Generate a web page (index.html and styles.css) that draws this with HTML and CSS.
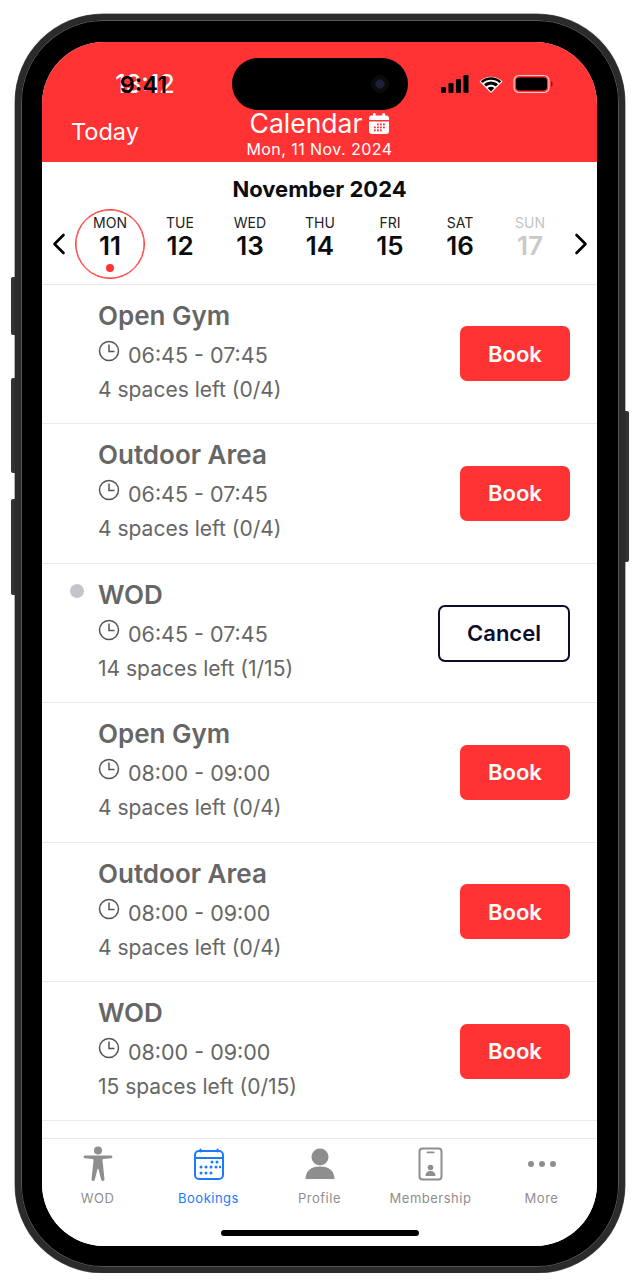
FILE: index.html
```html
<!DOCTYPE html>
<html lang="en">
<head>
  <meta charset="UTF-8">
  <title>Calendar</title>
  <link rel="stylesheet" href="styles.css">
</head>
<body>

  <div class="phone">
    <span class="side-btn btn-mute"></span>
    <span class="side-btn btn-up"></span>
    <span class="side-btn btn-down"></span>
    <span class="side-btn btn-power"></span>

    <div class="screen">
      <div class="island">
        <span class="island-cam"></span>
      </div>

      <header class="header">
        <div class="status">
          <div class="clock">
            <span class="clock-under">13:12</span>
            <span class="clock-over">9:41</span>
          </div>
          <div class="status-icons">
            <svg width="28" height="18" viewBox="0 0 28 18">
              <rect x="0" y="12" width="5" height="6" rx="1.2"/>
              <rect x="7.5" y="8" width="5" height="10" rx="1.2"/>
              <rect x="15" y="4" width="5" height="14" rx="1.2"/>
              <rect x="22.5" y="0" width="5" height="18" rx="1.2"/>
            </svg>
            <svg width="26" height="20" viewBox="0 0 26 20">
              <path d="M13 19 L1.5 7.5 C8 1 18 1 24.5 7.5 Z" fill="#fff"/>
              <path d="M13 17.6 L9.6 14 C11.6 12.2 14.4 12.2 16.4 14 Z"/>
              <path d="M8.2 12.6 L6 10.3 C10 6.6 16 6.6 20 10.3 L17.8 12.6 C14.8 10 11.2 10 8.2 12.6 Z"/>
              <path d="M4.6 9 L2.8 7.2 C8.6 2 17.4 2 23.2 7.2 L21.4 9 C16.6 4.8 9.4 4.8 4.6 9 Z"/>
            </svg>
            <svg width="40" height="20" viewBox="0 0 40 20">
              <rect x="1" y="1.5" width="35" height="17" rx="5" fill="none" stroke="#fff" stroke-opacity="0.75" stroke-width="1.2"/>
              <rect x="3" y="3.5" width="31" height="13" rx="3.4" fill="#000"/>
              <rect x="38" y="7.5" width="1.4" height="5" rx="0.7" fill="#7a1a1a"/>
            </svg>
          </div>
        </div>

        <div class="header-main">
          <div class="today">Today</div>
          <div class="header-title">
            <div class="title-line">
              Calendar
              <svg class="title-icon" width="20" height="21" viewBox="0 0 20 21">
                <rect x="4" y="0" width="2.6" height="5" rx="1.2" fill="#fff"/>
                <rect x="13.4" y="0" width="2.6" height="5" rx="1.2" fill="#fff"/>
                <path d="M3 2.5h14a3 3 0 0 1 3 3V7H0V5.500a3 3 0 0 1 3-3z" fill="#fff"/>
                <path d="M0 8.500h20V18a3 3 0 0 1-3 3H3a3 3 0 0 1-3-3z" fill="#fff"/>
                <g fill="#ff3333">
                  <rect x="8" y="10.500" width="1.800" height="1.800"/>
                  <rect x="11" y="10.500" width="1.800" height="1.800"/>
                  <rect x="14" y="10.500" width="1.800" height="1.800"/>
                  <rect x="5" y="13.500" width="1.800" height="1.800"/>
                  <rect x="8" y="13.500" width="1.800" height="1.800"/>
                  <rect x="11" y="13.500" width="1.800" height="1.800"/>
                  <rect x="14" y="13.500" width="1.800" height="1.800"/>
                  <rect x="5" y="16.500" width="1.800" height="1.800"/>
                  <rect x="8" y="16.500" width="1.800" height="1.800"/>
                  <rect x="11" y="16.500" width="1.800" height="1.800"/>
                </g>
              </svg>
            </div>
            <div class="title-sub">Mon, 11 Nov. 2024</div>
          </div>
          <div></div>
        </div>
      </header>

      <section class="week">
        <h2 class="month">November 2024</h2>
        <div class="days">
          <svg class="arrow" width="14" height="22" viewBox="0 0 14 22"><path d="M11.500 2 L2.500 11 L11.500 20" fill="none" stroke="#000" stroke-width="2.600" stroke-linecap="round" stroke-linejoin="round"/></svg>
          <div class="day day-active"><span class="day-name">MON</span><span class="day-num">11</span><span class="day-dot"></span></div>
          <div class="day"><span class="day-name">TUE</span><span class="day-num">12</span></div>
          <div class="day"><span class="day-name">WED</span><span class="day-num">13</span></div>
          <div class="day"><span class="day-name">THU</span><span class="day-num">14</span></div>
          <div class="day"><span class="day-name">FRI</span><span class="day-num">15</span></div>
          <div class="day"><span class="day-name">SAT</span><span class="day-num">16</span></div>
          <div class="day day-off"><span class="day-name">SUN</span><span class="day-num">17</span></div>
          <svg class="arrow" width="14" height="22" viewBox="0 0 14 22"><path d="M2.500 2 L11.500 11 L2.500 20" fill="none" stroke="#000" stroke-width="2.600" stroke-linecap="round" stroke-linejoin="round"/></svg>
        </div>
      </section>

      <main class="classes">
        <div class="row">
          <div class="mark"></div>
          <div class="info">
            <div class="name">Open Gym</div>
            <div class="time"><svg class="clock-icon" viewBox="0 0 22 22"><circle cx="11" cy="11" r="9.500"/><path d="M11 4.500V11.500H16.500"/></svg>06:45 - 07:45</div>
            <div class="spaces">4 spaces left (0/4)</div>
          </div>
          <button class="btn btn-book">Book</button>
        </div>
        <div class="row">
          <div class="mark"></div>
          <div class="info">
            <div class="name">Outdoor Area</div>
            <div class="time"><svg class="clock-icon" viewBox="0 0 22 22"><circle cx="11" cy="11" r="9.500"/><path d="M11 4.500V11.500H16.500"/></svg>06:45 - 07:45</div>
            <div class="spaces">4 spaces left (0/4)</div>
          </div>
          <button class="btn btn-book">Book</button>
        </div>
        <div class="row">
          <div class="mark"><span class="booked-dot"></span></div>
          <div class="info">
            <div class="name">WOD</div>
            <div class="time"><svg class="clock-icon" viewBox="0 0 22 22"><circle cx="11" cy="11" r="9.500"/><path d="M11 4.500V11.500H16.500"/></svg>06:45 - 07:45</div>
            <div class="spaces">14 spaces left (1/15)</div>
          </div>
          <button class="btn btn-cancel">Cancel</button>
        </div>
        <div class="row">
          <div class="mark"></div>
          <div class="info">
            <div class="name">Open Gym</div>
            <div class="time"><svg class="clock-icon" viewBox="0 0 22 22"><circle cx="11" cy="11" r="9.500"/><path d="M11 4.500V11.500H16.500"/></svg>08:00 - 09:00</div>
            <div class="spaces">4 spaces left (0/4)</div>
          </div>
          <button class="btn btn-book">Book</button>
        </div>
        <div class="row">
          <div class="mark"></div>
          <div class="info">
            <div class="name">Outdoor Area</div>
            <div class="time"><svg class="clock-icon" viewBox="0 0 22 22"><circle cx="11" cy="11" r="9.500"/><path d="M11 4.500V11.500H16.500"/></svg>08:00 - 09:00</div>
            <div class="spaces">4 spaces left (0/4)</div>
          </div>
          <button class="btn btn-book">Book</button>
        </div>
        <div class="row">
          <div class="mark"></div>
          <div class="info">
            <div class="name">WOD</div>
            <div class="time"><svg class="clock-icon" viewBox="0 0 22 22"><circle cx="11" cy="11" r="9.500"/><path d="M11 4.500V11.500H16.500"/></svg>08:00 - 09:00</div>
            <div class="spaces">15 spaces left (0/15)</div>
          </div>
          <button class="btn btn-book">Book</button>
        </div>
      </main>

      <nav class="tabs">
        <div class="tab">
          <svg class="tab-icon" width="30" height="36" viewBox="0 0 30 36">
            <circle cx="15" cy="4.500" r="4"/>
            <path d="M2 9.500h26a1.300 1.300 0 0 1 0 2.800l-7.500.7c-.7.1-1 .5-1 1.200l2 19a1.700 1.700 0 0 1-3.300.6L15.500 23h-1l-2.700 10.800a1.700 1.700 0 0 1-3.300-.6l2-19c0-.7-.3-1.100-1-1.200L2 12.300a1.300 1.300 0 0 1 0-2.800z"/>
          </svg>
          <span>WOD</span>
        </div>
        <div class="tab tab-active">
          <svg class="tab-icon" width="30" height="32" viewBox="0 0 30 32">
            <rect x="1" y="3" width="28" height="28" rx="4" fill="none" stroke="#1a7bff" stroke-width="2"/>
            <path d="M1 10h28" stroke="#1a7bff" stroke-width="2"/>
            <rect x="5.500" y="0.500" width="2" height="4" rx="1"/>
            <rect x="22.500" y="0.500" width="2" height="4" rx="1"/>
            <circle cx="18" cy="14" r="1.500"/><circle cx="23" cy="14" r="1.500"/>
            <circle cx="7" cy="19" r="1.500"/><circle cx="12" cy="19" r="1.500"/><circle cx="17" cy="19" r="1.500"/><circle cx="22" cy="19" r="1.500"/><circle cx="26" cy="19" r="1.200"/>
            <circle cx="7" cy="25" r="1.500"/><circle cx="12" cy="25" r="1.500"/><circle cx="17" cy="25" r="1.500"/>
          </svg>
          <span>Bookings</span>
        </div>
        <div class="tab">
          <svg class="tab-icon" width="30" height="32" viewBox="0 0 30 32">
            <circle cx="15" cy="9" r="8.500"/>
            <path d="M0.500 31 C0.500 23 6 18.500 15 18.500 C24 18.500 29.500 23 29.500 31 Z"/>
          </svg>
          <span>Profile</span>
        </div>
        <div class="tab">
          <svg class="tab-icon" width="26" height="34" viewBox="0 0 26 34">
            <rect x="1.500" y="1.500" width="22" height="31" rx="3" fill="none" stroke="#8e8e8e" stroke-width="2"/>
            <rect x="8.500" y="4.500" width="8" height="1.800" rx="0.900"/>
            <circle cx="12.500" cy="20.500" r="2.800"/>
            <path d="M7.500 29 C7.500 25.500 9.500 24 12.500 24 C15.500 24 17.500 25.500 17.500 29 Z"/>
          </svg>
          <span>Membership</span>
        </div>
        <div class="tab">
          <svg class="tab-icon" width="30" height="32" viewBox="0 0 30 32">
            <circle cx="4" cy="16" r="3"/><circle cx="15" cy="16" r="3"/><circle cx="26" cy="16" r="3"/>
          </svg>
          <span>More</span>
        </div>
        <div class="home-bar"></div>
      </nav>
    </div>
  </div>

</body>
</html>
```

FILE: styles.css
```css
body {
  margin: 0;
  background: white;
  font-family: Inter, "Liberation Sans", sans-serif;
}

.phone {
  position: relative;
  box-sizing: border-box;
  width: 610px;
  height: 1259px;
  margin: 14px 0 0 15px;
  padding: 22px 22px 21px 21px;
  background: #000;
  border: 6px solid #2b2b2b;
  border-radius: 88px;
  box-shadow: 0 0 0 0.5px #6a6a6a, inset 0 0 0 1px #555;
}

.side-btn {
  position: absolute;
  width: 4px;
  background: #333;
}

.btn-mute { left: -10px; top: 257px; height: 58px; border-radius: 2px 0 0 2px; }
.btn-up { left: -10px; top: 358px; height: 95px; border-radius: 2px 0 0 2px; }
.btn-down { left: -10px; top: 479px; height: 96px; border-radius: 2px 0 0 2px; }
.btn-power { right: -10px; top: 391px; height: 151px; border-radius: 0 2px 2px 0; }

.screen {
  position: relative;
  display: flex;
  flex-direction: column;
  height: 100%;
  background: white;
  border-radius: 62px;
  overflow: hidden;
}

.island {
  position: absolute;
  left: 190px;
  top: 16px;
  width: 176px;
  height: 52px;
  background: #000;
  border-radius: 26px;
}

.island-cam {
  position: absolute;
  right: 19px;
  top: 17px;
  width: 18px;
  height: 18px;
  border-radius: 50%;
  background: radial-gradient(circle, #1c2038 0 4px, #0a0a0c 5px 9px);
}

/* red header */
.header {
  height: 120px;
  flex-shrink: 0;
  background: #ff3333;
  color: white;
}

.status {
  display: flex;
  align-items: center;
  height: 48px;
  padding-top: 18px;
}

.clock {
  display: grid;
  width: 62px;
  margin-left: 72px;
  justify-items: center;
  align-items: center;
}

.clock span {
  grid-area: 1 / 1;
}

.clock-under {
  color: white;
  font-size: 25px;
  font-weight: 500;
}

.clock-over {
  padding-right: 3px;
  color: black;
  font-size: 23.500px;
  font-weight: 600;
}

.status-icons {
  display: flex;
  align-items: center;
  gap: 9px;
  margin-left: auto;
  padding-right: 44px;
}

.header-main {
  display: grid;
  grid-template-columns: 1fr auto 1fr;
  height: 54px;
}

.today {
  padding-left: 29px;
  padding-top: 9px;
  font-size: 23.500px;
  line-height: 30px;
}

.header-title {
  text-align: center;
}

.title-line {
  display: flex;
  align-items: center;
  justify-content: center;
  gap: 7px;
  height: 30px;
  font-size: 26.500px;
}

.title-sub {
  margin-top: 2px;
  font-size: 16px;
  line-height: 18px;
  letter-spacing: 0.45px;
}

/* week strip */
.week {
  box-sizing: border-box;
  height: 122.750px;
  flex-shrink: 0;
  border-bottom: 1px solid #e8e8e8;
}

.month {
  margin: 0;
  padding-top: 14px;
  font-size: 22px;
  line-height: 26px;
  font-weight: 700;
  text-align: center;
  color: #0c0c0c;
}

.days {
  display: flex;
  align-items: flex-start;
  padding: 7px 0 0 10px;
}

.arrow {
  margin-top: 24px;
  flex-shrink: 0;
}

.days .arrow:first-child { margin-right: 9px; }
.days .arrow:last-child { margin-left: 9px; }

.day {
  position: relative;
  display: flex;
  flex-direction: column;
  align-items: center;
  box-sizing: border-box;
  width: 70px;
  height: 70px;
  padding-top: 6px;
}

.day-name {
  font-size: 14px;
  line-height: 16px;
  color: #222;
}

.day-num {
  font-size: 26px;
  line-height: 30px;
  font-weight: 600;
  color: #0c0c0c;
}

.day-active {
  border: 1.5px solid #ff3333;
  border-radius: 50%;
  padding-top: 4.500px;
  box-shadow: inset 0 0 0 0.5px #ff3333;
}

.day-dot {
  position: absolute;
  left: 30px;
  bottom: 6px;
  width: 8px;
  height: 8px;
  border-radius: 50%;
  background: #ff3333;
}

.day-off .day-name { color: #c4c4c4; }
.day-off .day-num { color: #c9c9c9; }

/* class rows */
.classes {
  flex: 1;
  min-height: 0;
}

.row {
  box-sizing: border-box;
  display: flex;
  align-items: center;
  height: 139.450px;
  padding-right: 27px;
  border-bottom: 1px solid #e9e9ee;
}

.mark {
  width: 56px;
  align-self: stretch;
  flex-shrink: 0;
}

.booked-dot {
  display: block;
  width: 14px;
  height: 14px;
  margin: 20px 0 0 28px;
  border-radius: 50%;
  background: #c4c5ca;
}

.info {
  flex: 1;
  padding-bottom: 3px;
  color: #666;
}

.name {
  font-size: 26px;
  line-height: 32px;
  font-weight: 600;
}

.time {
  display: flex;
  align-items: center;
  margin-top: 8px;
  font-size: 21.500px;
  line-height: 30px;
}

.clock-icon {
  width: 22px;
  height: 22px;
  margin: -8px 8px 0 0;
  fill: none;
  stroke: #555;
  stroke-width: 1.500;
}

.spaces {
  margin-top: 5px;
  font-size: 21px;
  line-height: 30px;
}

.btn {
  box-sizing: border-box;
  height: 55px;
  border-radius: 7px;
  font-family: inherit;
  font-size: 22px;
  font-weight: 600;
}

.btn-book {
  width: 110px;
  background: #ff3333;
  color: white;
  border: none;
}

.btn-cancel {
  width: 132px;
  height: 57px;
  margin-top: 1px;
  background: white;
  color: #0c0c2c;
  border: 2px solid #0c0c2c;
}

/* bottom tabs */
.tabs {
  position: relative;
  display: flex;
  box-sizing: border-box;
  height: 108px;
  flex-shrink: 0;
  border-top: 1px solid #e8e8ee;
  background: white;
}

.tab {
  flex: 1;
  display: flex;
  flex-direction: column;
  align-items: center;
  color: #8e8e8e;
  font-size: 13px;
  letter-spacing: 0.5px;
}

.tab-icon {
  height: 36px;
  margin-top: 7px;
  margin-bottom: 8px;
  fill: #8e8e8e;
}

.tab-active {
  color: #1a7bff;
}

.tab-active .tab-icon {
  fill: #1a7bff;
}

.home-bar {
  position: absolute;
  left: 179px;
  bottom: 10px;
  width: 198px;
  height: 6px;
  border-radius: 3px;
  background: #000;
}
```
